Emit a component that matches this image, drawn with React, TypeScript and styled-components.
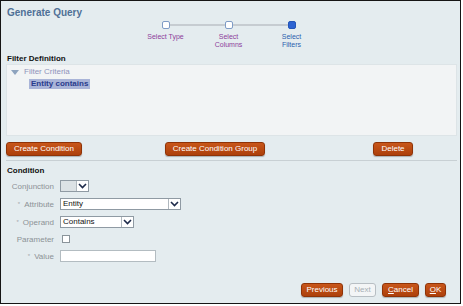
import React from 'react';
import styled, { createGlobalStyle } from 'styled-components';

const GlobalStyle = createGlobalStyle`
  body {
    margin: 0;
    background: #ffffff;
    font-family: "Liberation Sans", Arial, sans-serif;
  }
`;

const steps = [
  { label: ['Select Type'], state: 'done' },
  { label: ['Select', 'Columns'], state: 'done' },
  { label: ['Select', 'Filters'], state: 'current' },
];

const Chevron = () => (
  <svg width="9" height="6" viewBox="0 0 9 6">
    <path d="M1 1 L4.5 4.5 L8 1" fill="none" stroke="#1d2a4a" strokeWidth="1.6" />
  </svg>
);

const Select = ({ value, width }: { value?: string; width: number }) => (
  <SelectBox style={{ width }}>
    <SelectValue>{value}</SelectValue>
    <SelectArrow>
      <Chevron />
    </SelectArrow>
  </SelectBox>
);

const App = () => {
  return (
    <>
      <GlobalStyle />
      <Frame>
        <Title>Generate Query</Title>
        <Train>
          {steps.map((s, i) => (
            <Step key={i} $first={i === 0} $last={i === steps.length - 1}>
              <Node $current={s.state === 'current'} />
              <StepLabel $current={s.state === 'current'}>
                {s.label.map((l) => (
                  <div key={l}>{l}</div>
                ))}
              </StepLabel>
            </Step>
          ))}
        </Train>

        <SectionTitle>Filter Definition</SectionTitle>
        <TreePanel>
          <TreeRow>
            <Triangle />
            <TreeText>Filter Criteria</TreeText>
          </TreeRow>
          <TreeChild>
            <Selected>Entity contains</Selected>
          </TreeChild>
        </TreePanel>

        <ActionRow>
          <Button style={{ width: 76 }}>Create Condition</Button>
          <Button style={{ width: 100 }}>Create Condition Group</Button>
          <Button style={{ width: 40 }}>Delete</Button>
        </ActionRow>

        <Separator />

        <SectionTitle $top={5}>Condition</SectionTitle>
        <Form>
          <Label>Conjunction</Label>
          <Control>
            <ConjBox>
              <ConjField />
              <SelectArrow>
                <Chevron />
              </SelectArrow>
            </ConjBox>
          </Control>

          <Label>
            <Req>*</Req>Attribute
          </Label>
          <Control>
            <Select value="Entity" width={121} />
          </Control>

          <Label>
            <Req>*</Req>Operand
          </Label>
          <Control>
            <Select value="Contains" width={74} />
          </Control>

          <Label $h={10}>Parameter</Label>
          <Control $h={10}>
            <Checkbox />
          </Control>

          <Label>
            <Req>*</Req>Value
          </Label>
          <Control>
            <TextInput />
          </Control>
        </Form>

        <Footer>
          <Button style={{ width: 42 }}>Previous</Button>
          <Button $disabled style={{ width: 27 }}>
            Next
          </Button>
          <Button style={{ width: 37 }}>
            <u>C</u>ancel
          </Button>
          <Button style={{ width: 21 }}>
            <u>O</u>K
          </Button>
        </Footer>
      </Frame>
    </>
  );
};

export default App;

const Frame = styled.div`
  box-sizing: border-box;
  width: 461px;
  height: 304px;
  border: 1px solid #151515;
  background: #e4ecef;
  display: flex;
  flex-direction: column;
  overflow: hidden;
`;

const Title = styled.div`
  margin: 6px 0 0 6px;
  font-size: 10px;
  line-height: 12px;
  font-weight: bold;
  color: #4f7096;
`;

const Train = styled.div`
  display: flex;
  margin: 2px 0 0 133px;
`;

const Step = styled.div<{ $first?: boolean; $last?: boolean }>`
  position: relative;
  width: 63px;
  display: flex;
  flex-direction: column;
  align-items: center;

  &::before,
  &::after {
    content: '';
    position: absolute;
    top: 3px;
    height: 2px;
    width: 50%;
    background: #c6ccd1;
  }
  &::before {
    left: 0;
    display: ${(p) => (p.$first ? 'none' : 'block')};
  }
  &::after {
    right: 0;
    display: ${(p) => (p.$last ? 'none' : 'block')};
  }
`;

const Node = styled.div<{ $current?: boolean }>`
  position: relative;
  z-index: 1;
  box-sizing: border-box;
  width: 8px;
  height: 8px;
  border-radius: 2px;
  border: 1px solid ${(p) => (p.$current ? '#2456b8' : '#7f9cc6')};
  background: ${(p) => (p.$current ? '#2d63d2' : '#ffffff')};
`;

const StepLabel = styled.div<{ $current?: boolean }>`
  margin-top: 4px;
  font-size: 7px;
  line-height: 8px;
  text-align: center;
  color: ${(p) => (p.$current ? '#2c5fae' : '#8d3d9b')};
`;

const SectionTitle = styled.div<{ $top?: number }>`
  margin: ${(p) => p.$top ?? 5}px 0 0 6px;
  font-size: 8px;
  line-height: 10px;
  font-weight: bold;
  color: #111;
`;

const TreePanel = styled.div`
  box-sizing: border-box;
  margin: 0 3px 0 5px;
  height: 72px;
  background: #f2f4f5;
  border: 1px solid #dde4e7;
  padding: 2px 0 0 4px;
  font-size: 8px;
  line-height: 10px;
`;

const TreeRow = styled.div`
  display: flex;
  align-items: center;
  gap: 5px;
  height: 10px;
`;

const Triangle = styled.div`
  width: 0;
  height: 0;
  border-left: 4px solid transparent;
  border-right: 4px solid transparent;
  border-top: 5px solid #8ea3be;
`;

const TreeText = styled.span`
  color: #8f93bb;
`;

const TreeChild = styled.div`
  display: flex;
  margin: 2px 0 0 18px;
`;

const Selected = styled.span`
  background: #a9b4d8;
  color: #283b8c;
  font-weight: bold;
  line-height: 10px;
  padding: 0 2px;
`;

const ActionRow = styled.div`
  display: grid;
  grid-template-columns: 159px 208px 1fr;
  margin: 6px 0 0 5px;
`;

const Button = styled.div<{ $disabled?: boolean }>`
  box-sizing: border-box;
  height: 14px;
  border-radius: 3px;
  border: 1px solid ${(p) => (p.$disabled ? '#b7bec3' : '#8f3307')};
  background: ${(p) =>
    p.$disabled ? '#f3f5f6' : 'linear-gradient(#c8561a, #ad400b)'};
  color: ${(p) => (p.$disabled ? '#a7afb5' : '#ffffff')};
  font-size: 8px;
  line-height: 12px;
  text-align: center;
  white-space: nowrap;
  box-shadow: ${(p) => (p.$disabled ? 'none' : '0 1px 1px rgba(0,0,0,0.25)')};
`;

const Separator = styled.div`
  margin: 4px 3px 0 5px;
  height: 1px;
  background: #c8d0d4;
`;

const Form = styled.div`
  display: grid;
  grid-template-columns: 53px auto;
  column-gap: 6px;
  row-gap: 6px;
  margin-top: 4px;
  justify-content: start;
`;

const Label = styled.div<{ $h?: number }>`
  height: ${(p) => p.$h ?? 12}px;
  display: flex;
  align-items: center;
  justify-content: flex-end;
  font-size: 8px;
  color: #8c9296;
`;

const Req = styled.span`
  font-size: 6px;
  margin-right: 4px;
  color: #a2a8ac;
`;

const Control = styled.div<{ $h?: number }>`
  height: ${(p) => p.$h ?? 12}px;
  display: flex;
  align-items: center;
`;

const SelectBox = styled.div`
  box-sizing: border-box;
  height: 12px;
  display: flex;
  border: 1px solid #8f9aa3;
  background: #ffffff;
`;

const SelectValue = styled.div`
  flex: 1;
  font-size: 8px;
  line-height: 10px;
  padding-left: 2px;
  color: #111;
`;

const SelectArrow = styled.div`
  width: 11px;
  border-left: 1px solid #b0b8be;
  background: #ffffff;
  display: flex;
  align-items: center;
  justify-content: center;
`;

const ConjBox = styled(SelectBox)`
  width: 29px;
`;

const ConjField = styled.div`
  flex: 1;
  background: #dce2e5;
`;

const Checkbox = styled.div`
  box-sizing: border-box;
  width: 8px;
  height: 8px;
  margin-left: 2px;
  border: 1px solid #8a949a;
  background: #ffffff;
`;

const TextInput = styled.div`
  box-sizing: border-box;
  width: 96px;
  height: 12px;
  border: 1px solid #b3bcc1;
  background: #ffffff;
`;

const Footer = styled.div`
  display: flex;
  gap: 6px;
  margin: auto 14px 6px 0;
  justify-content: flex-end;
`;
